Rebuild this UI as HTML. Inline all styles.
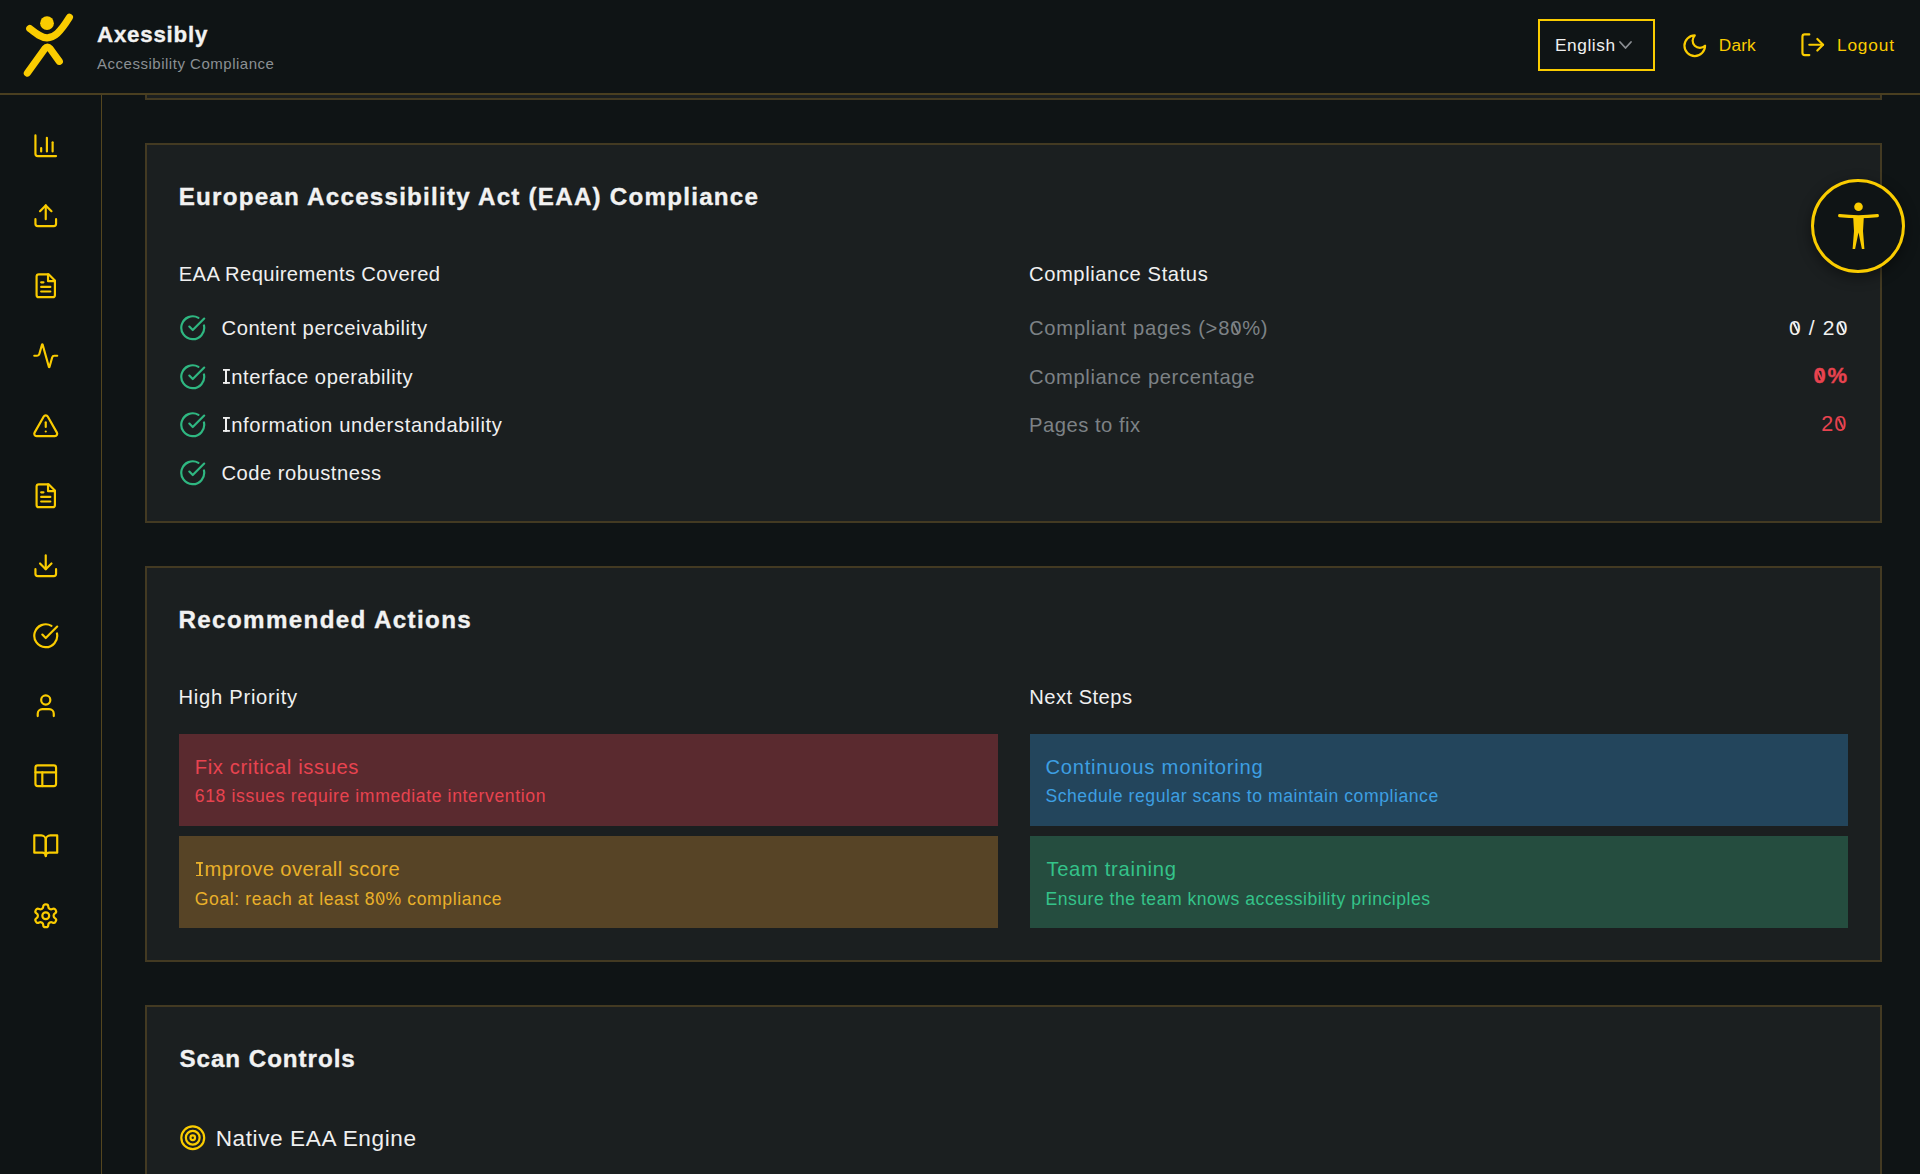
<!DOCTYPE html>
<html><head><meta charset="utf-8"><title>Axessibly</title>
<style>
html,body{margin:0;padding:0;}
body{width:1920px;height:1174px;overflow:hidden;position:relative;background:#0f1415;font-family:"Liberation Sans",sans-serif;}
.t{position:absolute;white-space:nowrap;}
svg{display:block;}
.z{position:relative;}
.z::after{content:"";position:absolute;left:50%;top:0.29em;height:0.54em;width:0.075em;margin-left:-0.0375em;background:currentColor;transform:rotate(-26deg);}
.zb::after{width:0.11em;margin-left:-0.055em;}
.I{display:inline-block;width:0.335em;height:0.73em;margin-right:0.07em;background:linear-gradient(currentColor,currentColor) center/0.1em 100% no-repeat,linear-gradient(currentColor,currentColor) top/100% 0.09em no-repeat,linear-gradient(currentColor,currentColor) bottom/100% 0.09em no-repeat;}
</style></head><body>
<div style="position:absolute;left:0;top:0;width:1920px;height:93px;background:#0f1415;z-index:-1"></div><div style="position:absolute;left:0;top:93px;width:1920px;height:2px;background:#4a3f20;"></div><svg style="position:absolute;left:0;top:0" width="100" height="93" viewBox="0 0 100 93">
<circle cx="47" cy="23.2" r="6.9" fill="#facc00"/>
<path d="M29.8 28.6 C36 33.6 41 37.7 47 37.8 C54 37.9 60 32.5 69.4 17.4" stroke="#facc00" stroke-width="7.2" fill="none" stroke-linecap="round"/>
<path d="M27.4 73 L45 48.5 Q47.4 45.5 50 48.5 L59.3 61.3" stroke="#facc00" stroke-width="7.2" fill="none" stroke-linecap="round" stroke-linejoin="round"/>
</svg><div class="t" style="left:97.10px;top:22.29px;font-size:22.3px;line-height:26.76px;color:#f2f2f2;letter-spacing:0.762px;font-weight:700;-webkit-text-stroke:0.35px #f2f2f2;">Axessibly</div>
<div class="t" style="left:97.00px;top:55.00px;font-size:15.0px;line-height:18.0px;color:#8b9094;letter-spacing:0.517px;">Accessibility Compliance</div>
<div style="position:absolute;left:1537.5px;top:19px;width:113px;height:48px;border:2px solid #facc00;"></div><div class="t" style="left:1555.00px;top:35.48px;font-size:17.3px;line-height:20.76px;color:#f0f0f0;letter-spacing:0.567px;">English</div>
<svg style="position:absolute;left:1617px;top:37px" width="18" height="16" viewBox="0 0 18 16"><path d="M3 5 L8.5 11 L14 5" stroke="#8b8f93" stroke-width="1.8" fill="none" stroke-linecap="round" stroke-linejoin="round"/></svg><svg style="position:absolute;left:1681.15px;top:31.55px" width="27.5" height="27.5" viewBox="0 0 24 24" fill="none" stroke="#facc00" stroke-width="1.9" stroke-linecap="round" stroke-linejoin="round"><path d="M12 3a6 6 0 0 0 9 9 9 9 0 1 1-9-9Z"/></svg>
<div class="t" style="left:1718.75px;top:35.48px;font-size:17.3px;line-height:20.76px;color:#facc00;letter-spacing:0.167px;">Dark</div>
<svg style="position:absolute;left:1798.85px;top:31.05px" width="27.5" height="27.5" viewBox="0 0 24 24" fill="none" stroke="#facc00" stroke-width="1.9" stroke-linecap="round" stroke-linejoin="round"><path d="M9 21H5a2 2 0 0 1-2-2V5a2 2 0 0 1 2-2h4"/><polyline points="16 17 21 12 16 7"/><line x1="21" y1="12" x2="9" y2="12"/></svg>
<div class="t" style="left:1837.00px;top:35.13px;font-size:17.3px;line-height:20.76px;color:#facc00;letter-spacing:0.820px;">Logout</div>
<div style="position:absolute;left:101px;top:95px;width:1px;height:1079px;background:#54461f;"></div><svg style="position:absolute;left:31.65px;top:131.85px" width="27.5" height="27.5" viewBox="0 0 24 24" fill="none" stroke="#facc00" stroke-width="1.9" stroke-linecap="round" stroke-linejoin="round"><path d="M3 3v16a2 2 0 0 0 2 2h16"/><path d="M18 17V9"/><path d="M13 17V5"/><path d="M8 17v-3"/></svg>
<svg style="position:absolute;left:31.65px;top:201.85px" width="27.5" height="27.5" viewBox="0 0 24 24" fill="none" stroke="#facc00" stroke-width="1.9" stroke-linecap="round" stroke-linejoin="round"><path d="M21 15v4a2 2 0 0 1-2 2H5a2 2 0 0 1-2-2v-4"/><polyline points="17 8 12 3 7 8"/><line x1="12" y1="3" x2="12" y2="15"/></svg>
<svg style="position:absolute;left:31.65px;top:271.85px" width="27.5" height="27.5" viewBox="0 0 24 24" fill="none" stroke="#facc00" stroke-width="1.9" stroke-linecap="round" stroke-linejoin="round"><path d="M14.5 2H6a2 2 0 0 0-2 2v16a2 2 0 0 0 2 2h12a2 2 0 0 0 2-2V7.5L14.5 2z"/><polyline points="14 2 14 8 20 8"/><line x1="16" y1="13" x2="8" y2="13"/><line x1="16" y1="17" x2="8" y2="17"/><line x1="10" y1="9" x2="8" y2="9"/></svg>
<svg style="position:absolute;left:31.65px;top:341.85px" width="27.5" height="27.5" viewBox="0 0 24 24" fill="none" stroke="#facc00" stroke-width="1.9" stroke-linecap="round" stroke-linejoin="round"><path d="M22 12h-2.48a2 2 0 0 0-1.93 1.46l-2.35 8.36a.25.25 0 0 1-.48 0L9.24 2.18a.25.25 0 0 0-.48 0l-2.35 8.36A2 2 0 0 1 4.49 12H2"/></svg>
<svg style="position:absolute;left:31.65px;top:411.85px" width="27.5" height="27.5" viewBox="0 0 24 24" fill="none" stroke="#facc00" stroke-width="1.9" stroke-linecap="round" stroke-linejoin="round"><path d="m21.73 18-8-14a2 2 0 0 0-3.48 0l-8 14A2 2 0 0 0 4 21h16a2 2 0 0 0 1.73-3Z"/><path d="M12 9v4"/><path d="M12 17h.01"/></svg>
<svg style="position:absolute;left:31.65px;top:481.85px" width="27.5" height="27.5" viewBox="0 0 24 24" fill="none" stroke="#facc00" stroke-width="1.9" stroke-linecap="round" stroke-linejoin="round"><path d="M14.5 2H6a2 2 0 0 0-2 2v16a2 2 0 0 0 2 2h12a2 2 0 0 0 2-2V7.5L14.5 2z"/><polyline points="14 2 14 8 20 8"/><line x1="16" y1="13" x2="8" y2="13"/><line x1="16" y1="17" x2="8" y2="17"/><line x1="10" y1="9" x2="8" y2="9"/></svg>
<svg style="position:absolute;left:31.65px;top:551.85px" width="27.5" height="27.5" viewBox="0 0 24 24" fill="none" stroke="#facc00" stroke-width="1.9" stroke-linecap="round" stroke-linejoin="round"><path d="M21 15v4a2 2 0 0 1-2 2H5a2 2 0 0 1-2-2v-4"/><polyline points="7 10 12 15 17 10"/><line x1="12" y1="15" x2="12" y2="3"/></svg>
<svg style="position:absolute;left:31.65px;top:621.85px" width="27.5" height="27.5" viewBox="0 0 24 24" fill="none" stroke="#facc00" stroke-width="1.9" stroke-linecap="round" stroke-linejoin="round"><path d="M21.801 10A10 10 0 1 1 17 3.335"/><path d="m9 11 3 3L22 4"/></svg>
<svg style="position:absolute;left:31.65px;top:691.85px" width="27.5" height="27.5" viewBox="0 0 24 24" fill="none" stroke="#facc00" stroke-width="1.9" stroke-linecap="round" stroke-linejoin="round"><path d="M19 21v-2a4 4 0 0 0-4-4H9a4 4 0 0 0-4 4v2"/><circle cx="12" cy="7" r="4"/></svg>
<svg style="position:absolute;left:31.65px;top:761.85px" width="27.5" height="27.5" viewBox="0 0 24 24" fill="none" stroke="#facc00" stroke-width="1.9" stroke-linecap="round" stroke-linejoin="round"><rect width="18" height="18" x="3" y="3" rx="2" ry="2"/><line x1="3" x2="21" y1="9" y2="9"/><line x1="9" x2="9" y1="21" y2="9"/></svg>
<svg style="position:absolute;left:31.65px;top:831.85px" width="27.5" height="27.5" viewBox="0 0 24 24" fill="none" stroke="#facc00" stroke-width="1.9" stroke-linecap="round" stroke-linejoin="round"><path d="M2 3h6a4 4 0 0 1 4 4v14a3 3 0 0 0-3-3H2z"/><path d="M22 3h-6a4 4 0 0 0-4 4v14a3 3 0 0 1 3-3h7z"/></svg>
<svg style="position:absolute;left:31.65px;top:901.85px" width="27.5" height="27.5" viewBox="0 0 24 24" fill="none" stroke="#facc00" stroke-width="1.9" stroke-linecap="round" stroke-linejoin="round"><path d="M12.22 2h-.44a2 2 0 0 0-2 2v.18a2 2 0 0 1-1 1.73l-.43.25a2 2 0 0 1-2 0l-.15-.08a2 2 0 0 0-2.73.73l-.22.38a2 2 0 0 0 .73 2.73l.15.1a2 2 0 0 1 1 1.72v.51a2 2 0 0 1-1 1.74l-.15.09a2 2 0 0 0-.73 2.73l.22.38a2 2 0 0 0 2.73.73l.15-.08a2 2 0 0 1 2 0l.43.25a2 2 0 0 1 1 1.73V20a2 2 0 0 0 2 2h.44a2 2 0 0 0 2-2v-.18a2 2 0 0 1 1-1.73l.43-.25a2 2 0 0 1 2 0l.15.08a2 2 0 0 0 2.73-.73l.22-.39a2 2 0 0 0-.73-2.73l-.15-.08a2 2 0 0 1-1-1.74v-.5a2 2 0 0 1 1-1.74l.15-.09a2 2 0 0 0 .73-2.73l-.22-.38a2 2 0 0 0-2.73-.73l-.15.08a2 2 0 0 1-2 0l-.43-.25a2 2 0 0 1-1-1.73V4a2 2 0 0 0-2-2z"/><circle cx="12" cy="12" r="3"/></svg>
<div style="position:absolute;z-index:-2;left:145px;top:-200px;width:1733px;height:296px;border:2px solid #433a22;background:#1b1f20;"></div>
<div style="position:absolute;left:145px;top:143px;width:1733px;height:376px;border:2px solid #433a22;background:#1b1f20;"></div>
<div style="position:absolute;left:145px;top:566px;width:1733px;height:392px;border:2px solid #433a22;background:#1b1f20;"></div>
<div style="position:absolute;left:145px;top:1005px;width:1733px;height:396px;border:2px solid #433a22;background:#1b1f20;"></div>
<div class="t" style="left:178.70px;top:182.49px;font-size:24.2px;line-height:29.04px;color:#f2f2f2;letter-spacing:1.226px;font-weight:700;-webkit-text-stroke:0.35px #f2f2f2;">European Accessibility Act (EAA) Compliance</div>
<div class="t" style="left:178.70px;top:262.38px;font-size:20.2px;line-height:24.24px;color:#f0f0f0;letter-spacing:0.383px;">EAA Requirements Covered</div>
<svg style="position:absolute;left:178.75px;top:313.75px" width="27.5" height="27.5" viewBox="0 0 24 24" fill="none" stroke="#2fb781" stroke-width="1.9" stroke-linecap="round" stroke-linejoin="round"><path d="M21.801 10A10 10 0 1 1 17 3.335"/><path d="m9 11 3 3L22 4"/></svg>
<div class="t" style="left:221.50px;top:316.08px;font-size:20.2px;line-height:24.24px;color:#f0f0f0;letter-spacing:0.595px;">Content perceivability</div>
<svg style="position:absolute;left:178.75px;top:362.65px" width="27.5" height="27.5" viewBox="0 0 24 24" fill="none" stroke="#2fb781" stroke-width="1.9" stroke-linecap="round" stroke-linejoin="round"><path d="M21.801 10A10 10 0 1 1 17 3.335"/><path d="m9 11 3 3L22 4"/></svg>
<div class="t" style="left:223.10px;top:365.08px;font-size:20.2px;line-height:24.24px;color:#f0f0f0;letter-spacing:0.560px;"><span class=I></span>nterface operability</div>
<svg style="position:absolute;left:178.75px;top:410.95px" width="27.5" height="27.5" viewBox="0 0 24 24" fill="none" stroke="#2fb781" stroke-width="1.9" stroke-linecap="round" stroke-linejoin="round"><path d="M21.801 10A10 10 0 1 1 17 3.335"/><path d="m9 11 3 3L22 4"/></svg>
<div class="t" style="left:223.10px;top:413.18px;font-size:20.2px;line-height:24.24px;color:#f0f0f0;letter-spacing:0.629px;"><span class=I></span>nformation understandability</div>
<svg style="position:absolute;left:178.75px;top:459.25px" width="27.5" height="27.5" viewBox="0 0 24 24" fill="none" stroke="#2fb781" stroke-width="1.9" stroke-linecap="round" stroke-linejoin="round"><path d="M21.801 10A10 10 0 1 1 17 3.335"/><path d="m9 11 3 3L22 4"/></svg>
<div class="t" style="left:221.50px;top:461.48px;font-size:20.2px;line-height:24.24px;color:#f0f0f0;letter-spacing:0.500px;">Code robustness</div>
<div class="t" style="left:1029.00px;top:262.38px;font-size:20.2px;line-height:24.24px;color:#f0f0f0;letter-spacing:0.581px;">Compliance Status</div>
<div class="t" style="left:1029.00px;top:316.08px;font-size:20.2px;line-height:24.24px;color:#7d8286;letter-spacing:0.752px;">Compliant pages (&gt;8<span class=z>0</span>%)</div>
<div class="t" style="left:1029.00px;top:365.08px;font-size:20.2px;line-height:24.24px;color:#7d8286;letter-spacing:0.610px;">Compliance percentage</div>
<div class="t" style="left:1029.00px;top:413.18px;font-size:20.2px;line-height:24.24px;color:#7d8286;letter-spacing:0.509px;">Pages to fix</div>
<div class="t" style="left:1789.00px;top:315.32px;font-size:21.0px;line-height:25.2px;color:#f0f0f0;letter-spacing:1.160px;"><span class=z>0</span> / 2<span class=z>0</span></div>
<div class="t" style="left:1813.40px;top:363.38px;font-size:22.0px;line-height:26.4px;color:#e8434f;letter-spacing:1.800px;font-weight:700;-webkit-text-stroke:0.35px #e8434f;"><span class='z zb'>0</span>%</div>
<div class="t" style="left:1821.30px;top:411.95px;font-size:21.5px;line-height:25.8px;color:#e8434f;letter-spacing:1.100px;">2<span class=z>0</span></div>
<div style="position:absolute;left:1811.3px;top:178.7px;width:88px;height:88px;border:3px solid #facc00;border-radius:50%;background:#0f1415;box-shadow:0 4px 14px rgba(0,0,0,0.45);"></div>
<svg style="position:absolute;left:1811.3px;top:178.7px" width="94" height="94" viewBox="0 0 94 94">
<circle cx="47.5" cy="27.8" r="4.3" fill="#facc00"/>
<path d="M28.6 36.6 Q47.5 38.8 66.4 36.6" stroke="#facc00" stroke-width="3.1" fill="none" stroke-linecap="round"/>
<path d="M42.2 38.2 L52.8 38.2 L52 52 L53.4 70 L50.9 70 L47.5 53.5 L44.1 70 L41.6 70 L43 52 Z" fill="#facc00"/>
</svg><div class="t" style="left:178.50px;top:604.79px;font-size:24.2px;line-height:29.04px;color:#f2f2f2;letter-spacing:1.350px;font-weight:700;-webkit-text-stroke:0.35px #f2f2f2;">Recommended Actions</div>
<div class="t" style="left:178.50px;top:685.48px;font-size:20.2px;line-height:24.24px;color:#f0f0f0;letter-spacing:0.725px;">High Priority</div>
<div class="t" style="left:1029.30px;top:685.48px;font-size:20.2px;line-height:24.24px;color:#f0f0f0;letter-spacing:0.444px;">Next Steps</div>
<div style="position:absolute;left:179px;top:734px;width:818.5px;height:91.5px;background:#5a2a2f;"></div>
<div style="position:absolute;left:179px;top:836.3px;width:818.5px;height:91.5px;background:#574426;"></div>
<div style="position:absolute;left:1029.5px;top:734px;width:818px;height:91.5px;background:#23455c;"></div>
<div style="position:absolute;left:1029.5px;top:836.3px;width:818px;height:91.5px;background:#254d3f;"></div>
<div class="t" style="left:194.80px;top:755.38px;font-size:20.2px;line-height:24.24px;color:#e8434f;letter-spacing:0.617px;">Fix critical issues</div>
<div class="t" style="left:194.80px;top:786.34px;font-size:17.6px;line-height:21.12px;color:#e8434f;letter-spacing:0.625px;">618 issues require immediate intervention</div>
<div class="t" style="left:196.40px;top:857.48px;font-size:20.2px;line-height:24.24px;color:#e9b02a;letter-spacing:0.405px;"><span class=I></span>mprove overall score</div>
<div class="t" style="left:194.80px;top:888.84px;font-size:17.6px;line-height:21.12px;color:#e9b02a;letter-spacing:0.597px;">Goal: reach at least 8<span class=z>0</span>% compliance</div>
<div class="t" style="left:1045.40px;top:755.38px;font-size:20.2px;line-height:24.24px;color:#3d9fe2;letter-spacing:0.770px;">Continuous monitoring</div>
<div class="t" style="left:1045.40px;top:786.34px;font-size:17.6px;line-height:21.12px;color:#3d9fe2;letter-spacing:0.548px;">Schedule regular scans to maintain compliance</div>
<div class="t" style="left:1046.40px;top:857.48px;font-size:20.2px;line-height:24.24px;color:#34c38a;letter-spacing:0.692px;">Team training</div>
<div class="t" style="left:1045.40px;top:888.84px;font-size:17.6px;line-height:21.12px;color:#34c38a;letter-spacing:0.507px;">Ensure the team knows accessibility principles</div>
<div class="t" style="left:179.50px;top:1043.59px;font-size:24.2px;line-height:29.04px;color:#f2f2f2;letter-spacing:0.942px;font-weight:700;-webkit-text-stroke:0.35px #f2f2f2;">Scan Controls</div>
<svg style="position:absolute;left:178.55px;top:1123.95px" width="27.5" height="27.5" viewBox="0 0 24 24" fill="none" stroke="#facc00" stroke-width="1.9" stroke-linecap="round" stroke-linejoin="round"><circle cx="12" cy="12" r="10"/><circle cx="12" cy="12" r="6"/><circle cx="12" cy="12" r="2"/></svg>
<div class="t" style="left:215.70px;top:1125.01px;font-size:22.6px;line-height:27.12px;color:#f0f0f0;letter-spacing:0.588px;">Native EAA Engine</div>

</body></html>
